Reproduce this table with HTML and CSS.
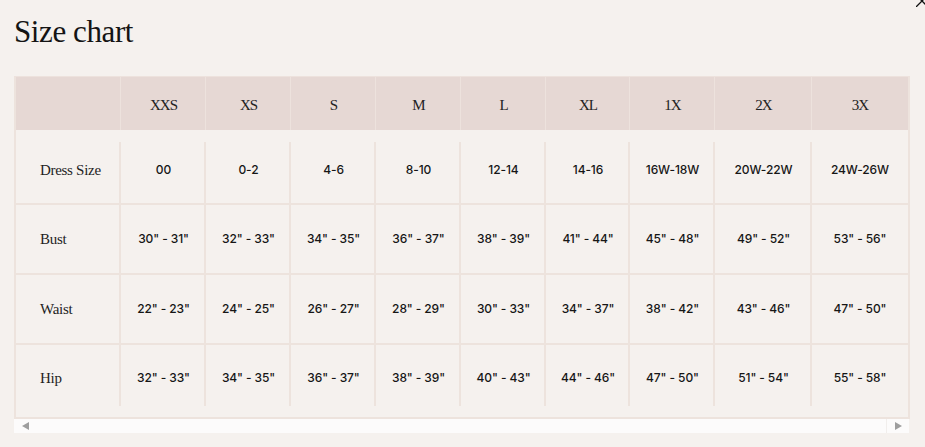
FILE: index.html
```html
<!doctype html>
<html lang="en">
    <head>
        <meta charset="UTF-8" />
        <meta name="viewport" content="width=device-width, initial-scale=1.0" />
        <title>Size chart</title>
        <link rel="stylesheet" href="styles.css">
    </head>
    <body>
        <div class="modal">
            <button class="close" aria-label="Close">
                <svg width="12" height="12" viewBox="0 0 12 12">
                    <path d="M0 0 L12 12 M0 12 L12 0" stroke="#111" stroke-width="1.3" fill="none" />
                </svg>
            </button>

            <h1>Size chart</h1>

            <div class="chart">
                <table class="size-table">
                    <colgroup>
                        <col class="col-label" />
                        <col class="col-std" span="5" />
                        <col class="col-xl" />
                        <col class="col-std" />
                        <col class="col-wide" />
                        <col class="col-last" />
                    </colgroup>
                    <thead>
                        <tr>
                            <th></th>
                            <th>XXS</th>
                            <th>XS</th>
                            <th>S</th>
                            <th>M</th>
                            <th>L</th>
                            <th>XL</th>
                            <th>1X</th>
                            <th>2X</th>
                            <th>3X</th>
                        </tr>
                    </thead>
                    <tbody>
                        <tr class="row-first">
                            <td>Dress Size</td>
                            <td>00</td>
                            <td>0-2</td>
                            <td>4-6</td>
                            <td>8-10</td>
                            <td>12-14</td>
                            <td>14-16</td>
                            <td>16W-18W</td>
                            <td>20W-22W</td>
                            <td>24W-26W</td>
                        </tr>
                        <tr>
                            <td>Bust</td>
                            <td>30" - 31"</td>
                            <td>32" - 33"</td>
                            <td>34" - 35"</td>
                            <td>36" - 37"</td>
                            <td>38" - 39"</td>
                            <td>41" - 44"</td>
                            <td>45" - 48"</td>
                            <td>49" - 52"</td>
                            <td>53" - 56"</td>
                        </tr>
                        <tr>
                            <td>Waist</td>
                            <td>22" - 23"</td>
                            <td>24" - 25"</td>
                            <td>26" - 27"</td>
                            <td>28" - 29"</td>
                            <td>30" - 33"</td>
                            <td>34" - 37"</td>
                            <td>38" - 42"</td>
                            <td>43" - 46"</td>
                            <td>47" - 50"</td>
                        </tr>
                        <tr class="row-last">
                            <td>Hip</td>
                            <td>32" - 33"</td>
                            <td>34" - 35"</td>
                            <td>36" - 37"</td>
                            <td>38" - 39"</td>
                            <td>40" - 43"</td>
                            <td>44" - 46"</td>
                            <td>47" - 50"</td>
                            <td>51" - 54"</td>
                            <td>55" - 58"</td>
                        </tr>
                    </tbody>
                </table>

                <div class="scrollbar">
                    <span class="arrow arrow-left"></span>
                    <span class="scroll-end">
                        <span class="arrow arrow-right"></span>
                    </span>
                </div>
            </div>
        </div>
    </body>
</html>
```

FILE: styles.css
```css
:root {
    --background-color: #f5f1ee;
    --header-color: #e6d8d4;
    --header-line: #ede2dd;
    --line-color: #ede3dd;
    --text-color: #161616;
    --serif: "Liberation Serif", "Times New Roman", serif;
    --sans: "Inter", "Noto Sans", sans-serif;
}

html,
body {
    margin: 0;
    height: 100%;
    overflow: hidden;
}

body {
    background-color: var(--background-color);
    color: var(--text-color);
}

.modal {
    position: relative;
    padding: 14px 0 0 14px;
}

.close {
    position: absolute;
    top: -5px;
    left: 916px;
    width: 12px;
    height: 12px;
    padding: 0;
    border: none;
    background: none;
    display: block;
}

.close svg {
    display: block;
}

h1 {
    margin: 0 0 26px;
    font-family: var(--serif);
    font-weight: 400;
    font-size: 31px;
    line-height: 36px;
    letter-spacing: -0.4px;
    color: #141414;
}

.chart {
    width: 896px;
}

.size-table {
    border-collapse: separate;
    border-spacing: 0;
    table-layout: fixed;
    width: 896px;
    border-left: 2px solid var(--line-color);
    border-right: 2px solid var(--line-color);
    border-top: 1px solid var(--header-line);
}

.col-label { width: 105px; }
.col-std { width: 85px; }
.col-xl { width: 84px; }
.col-wide { width: 97px; }
.col-last { width: 96px; }

th {
    padding: 20px 0 17px;
    line-height: 16px;
    font-family: var(--serif);
    font-weight: 400;
    font-size: 15px;
    letter-spacing: -1px;
    color: #222;
    text-align: center;
    background:
        linear-gradient(var(--header-line), var(--header-line)) right top / 1px 100% no-repeat,
        var(--header-color);
}

th:last-child {
    background: var(--header-color);
}

td {
    padding: 26px 0;
    line-height: 16px;
    font-family: var(--sans);
    font-weight: 500;
    font-size: 12px;
    letter-spacing: -0.1px;
    text-align: center;
    border-bottom: 2px solid var(--line-color);
    background: linear-gradient(var(--line-color), var(--line-color)) right top / 2px 100% no-repeat;
}

td:first-child {
    text-align: left;
    padding-left: 24px;
    font-family: var(--serif);
    font-weight: 400;
    font-size: 15px;
    letter-spacing: -0.3px;
    color: #1e1e1e;
}

.row-first td {
    padding-top: 32px;
    padding-bottom: 25px;
    background-position: right bottom;
    background-size: 2px calc(100% - 12px);
}

.row-last td {
    padding-top: 25px;
    padding-bottom: 31px;
    background-position: right top;
    background-size: 2px calc(100% - 11px);
}

td:last-child {
    background: none;
}

/* fake horizontal scrollbar */
.scrollbar {
    display: flex;
    justify-content: space-between;
    align-items: center;
    height: 14px;
    width: 895px;
    background-color: #fcfbfb;
}

.arrow {
    width: 0;
    height: 0;
    border-top: 4.5px solid transparent;
    border-bottom: 4.5px solid transparent;
}

.arrow-left {
    margin-left: 8px;
    border-right: 7px solid #9e9e9e;
}

.arrow-right {
    border-left: 7px solid #9e9e9e;
}

.scroll-end {
    display: flex;
    align-items: center;
    justify-content: center;
    width: 22px;
    height: 14px;
    border-left: 1px solid #f1eeec;
}
```
